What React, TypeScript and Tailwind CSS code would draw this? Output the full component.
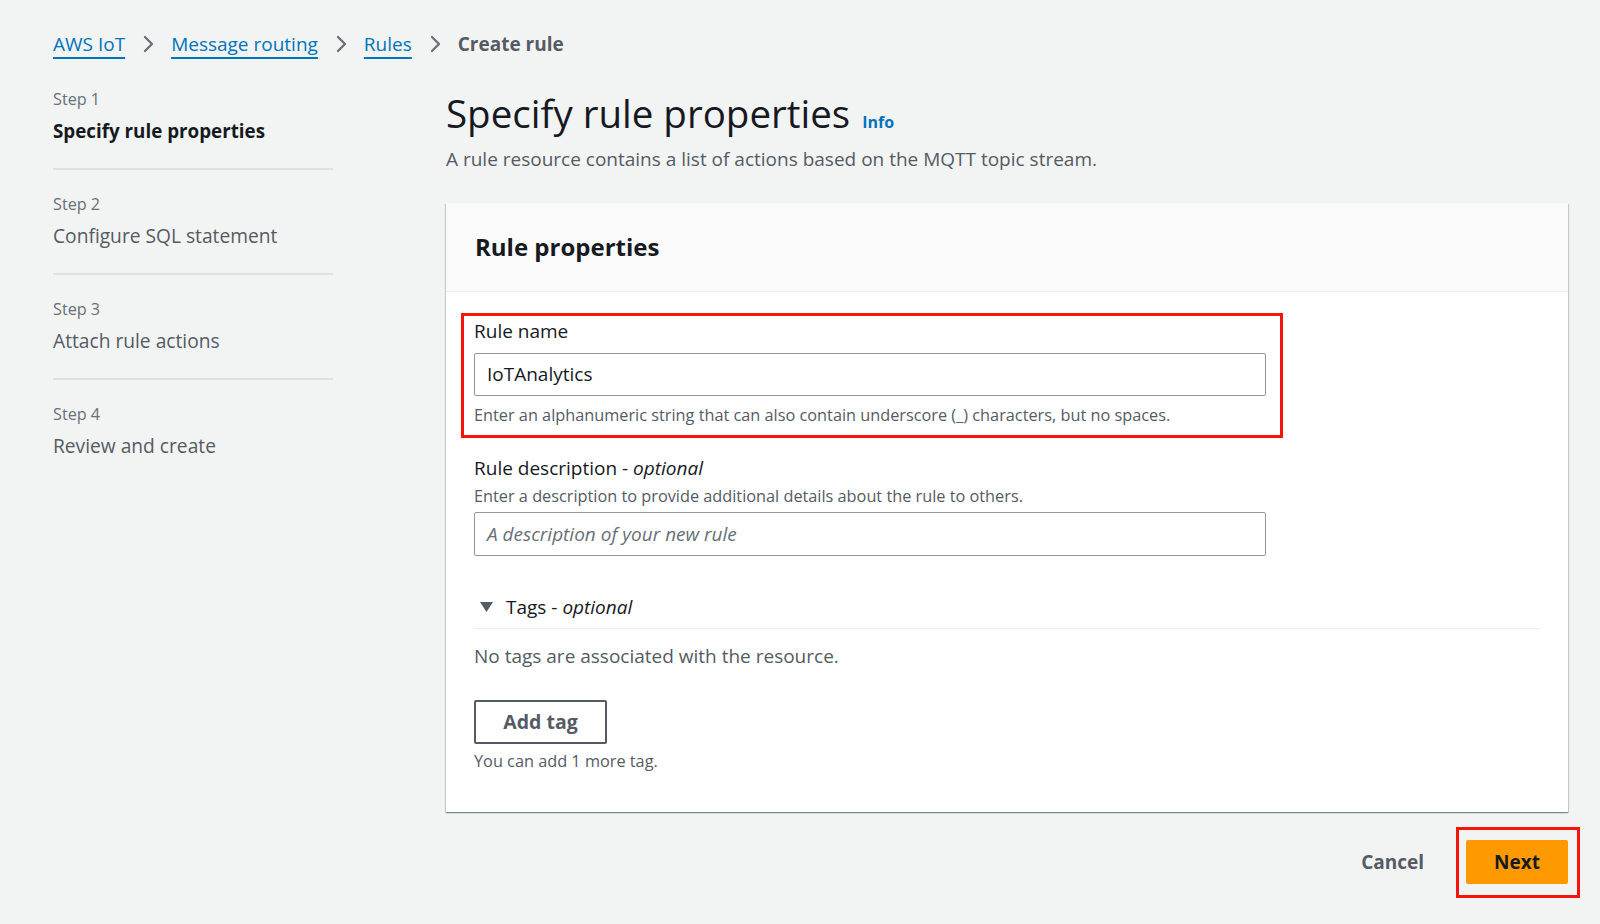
import React from 'react';

const steps = [
  { label: 'Step 1', name: 'Specify rule properties', active: true },
  { label: 'Step 2', name: 'Configure SQL statement', active: false },
  { label: 'Step 3', name: 'Attach rule actions', active: false },
  { label: 'Step 4', name: 'Review and create', active: false },
];

function Chevron() {
  return (
    <svg width="16" height="20" viewBox="0 0 16 20" className="shrink-0">
      <path d="M5 3 L12 10 L5 17" fill="none" stroke="#687078" strokeWidth="2.3" strokeLinecap="round" strokeLinejoin="round" />
    </svg>
  );
}

function Crumb({ children }: { children: React.ReactNode }) {
  return (
    <a href="#" className="text-[#0073bb] underline decoration-[1.5px] underline-offset-[6px]">
      {children}
    </a>
  );
}

export default function App() {
  return (
    <div className="min-h-screen w-full bg-[#f2f3f3] text-[#16191f] font-['Open_Sans',sans-serif] pl-[53px] pr-[32px] pt-[32px]">
      {/* Breadcrumbs */}
      <nav className="flex items-center h-[24px] text-[19px] leading-[24px]">
        <Crumb>AWS IoT</Crumb>
        <span className="mx-[15px] flex items-center"><Chevron /></span>
        <Crumb>Message routing</Crumb>
        <span className="mx-[15px] flex items-center"><Chevron /></span>
        <Crumb>Rules</Crumb>
        <span className="mx-[15px] flex items-center"><Chevron /></span>
        <span className="font-bold text-[#545b64]">Create rule</span>
      </nav>

      <div className="flex gap-[113px] mt-[33px]">
        {/* Wizard steps */}
        <ol className="w-[280px] shrink-0">
          {steps.map((s, i) => (
            <li
              key={s.label}
              className={
                i < steps.length - 1
                  ? 'pb-[25px] border-b-2 border-[#dfe2e2] mb-[24px]'
                  : ''
              }
            >
              <div className="text-[16.2px] leading-[20px] text-[#687078]">{s.label}</div>
              <div
                className={
                  s.active
                    ? 'mt-[10px] text-[18.8px] leading-[24px] font-bold text-[#16191f]'
                    : 'mt-[10px] text-[19.2px] leading-[24px] text-[#545b64]'
                }
              >
                {s.name}
              </div>
            </li>
          ))}
        </ol>

        {/* Main content */}
        <main className="flex-1 pt-[2px]">
          <div className="flex items-baseline gap-[12px]">
            <h1 className="text-[38.5px] leading-[44px] text-[#16191f]">Specify rule properties</h1>
            <a href="#" className="text-[16px] font-bold text-[#0073bb]">Info</a>
          </div>
          <p className="mt-[12px] text-[19px] leading-[24px] text-[#545b64]">
            A rule resource contains a list of actions based on the MQTT topic stream.
          </p>

          {/* Container */}
          <section className="mt-[32px] bg-white shadow-[0_1px_1px_0_rgba(0,28,36,0.3),1px_1px_1px_0_rgba(0,28,36,0.15),-1px_1px_1px_0_rgba(0,28,36,0.15)]">
            <header className="bg-[#fafafa] border-b border-[#eaeded] px-[29px] py-[28px]">
              <h2 className="text-[24px] leading-[32px] font-bold">Rule properties</h2>
            </header>

            <div className="px-[28px] pt-[27px] pb-[41px]">
              {/* Rule name */}
              <div className="relative">
                <div className="text-[19px] leading-[24px]">Rule name</div>
                <div className="mt-[10px] w-[792px] h-[43px] border border-[#8d99a8] rounded-[2px] px-[12px] flex items-center text-[19px]">
                  IoTAnalytics
                </div>
                <div className="mt-[9px] text-[16.3px] leading-[20px] text-[#545b64]">
                  Enter an alphanumeric string that can also contain underscore (_) characters, but no spaces.
                </div>
                <div className="absolute left-[-13px] top-[-6px] w-[822px] h-[125px] border-[3px] border-[#f5150a] pointer-events-none" />
              </div>

              {/* Rule description */}
              <div className="mt-[31px]">
                <div className="text-[19px] leading-[24px]">
                  Rule description - <i>optional</i>
                </div>
                <div className="mt-[6px] text-[16.3px] leading-[20px] text-[#545b64]">
                  Enter a description to provide additional details about the rule to others.
                </div>
                <div className="mt-[6px] w-[792px] h-[44px] border border-[#8d99a8] rounded-[2px] px-[12px] flex items-center text-[19px] italic text-[#687078]">
                  A description of your new rule
                </div>
              </div>

              {/* Tags */}
              <div className="mt-[39px]">
                <div className="flex items-center pb-[9px] border-b border-[#eaeded] text-[19px] leading-[24px]">
                  <svg width="13" height="10" viewBox="0 0 13 10" className="ml-[6px] mr-[13px]">
                    <path d="M0 0 H13 L6.5 10 Z" fill="#545b64" />
                  </svg>
                  <span>
                    Tags - <i>optional</i>
                  </span>
                </div>
                <div className="mt-[15px] text-[19px] leading-[24px] text-[#545b64]">
                  No tags are associated with the resource.
                </div>
                <button className="mt-[32px] w-[133px] h-[44px] border-2 border-[#545b64] rounded-[2px] bg-white text-[19.5px] font-bold text-[#545b64]">
                  Add tag
                </button>
                <div className="mt-[7px] text-[16.3px] leading-[20px] text-[#545b64]">
                  You can add 1 more tag.
                </div>
              </div>
            </div>
          </section>

          {/* Actions */}
          <div className="mt-[28px] flex items-center justify-end gap-[42px]">
            <button className="text-[19px] font-bold text-[#545b64]">Cancel</button>
            <div className="relative">
              <button className="w-[102px] h-[44px] bg-[#ff9900] rounded-[2px] text-[19px] font-bold text-[#16191f]">
                Next
              </button>
              <div className="absolute left-[-10px] top-[-13px] w-[124px] h-[71px] border-[3px] border-[#f5150a] pointer-events-none" />
            </div>
          </div>
        </main>
      </div>
    </div>
  );
}
